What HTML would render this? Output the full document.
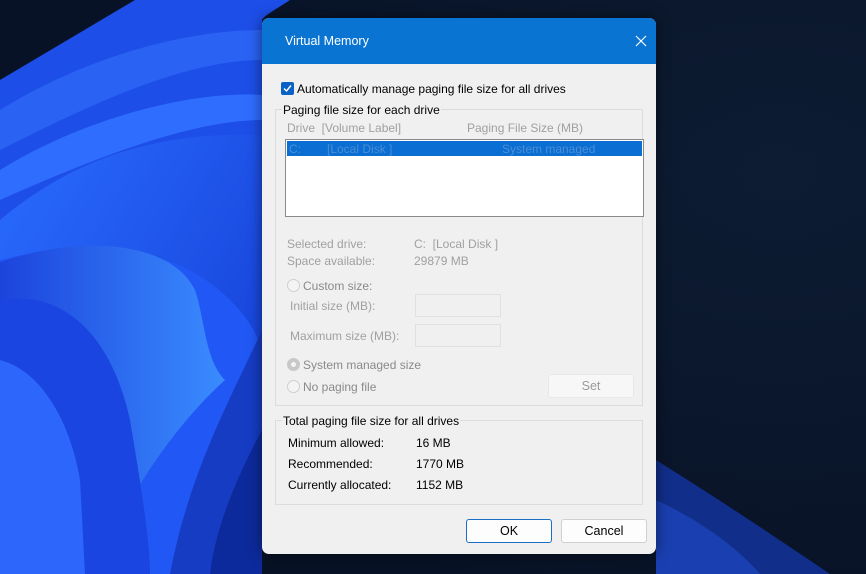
<!DOCTYPE html>
<html><head><meta charset="utf-8"><style>
*{margin:0;padding:0;box-sizing:border-box}
body{width:866px;height:574px;overflow:hidden;position:relative;background:#0b1830;font-family:"Liberation Sans",sans-serif;font-size:12px;color:#000}
.a{position:absolute;white-space:nowrap}
.g{color:#a0a0a0}
#dlg{position:absolute;left:262px;top:18px;width:394px;height:536px;background:#f0f0f0;border-radius:7px;overflow:hidden;box-shadow:0 0 14px rgba(0,0,0,.5)}
#tb{position:absolute;left:0;top:0;width:394px;height:46px;background:#0a74d2}
.box{position:absolute;border:1px solid #dcdcdc}
.btn{position:absolute;background:#fdfdfd;border:1px solid #d0d0d0;border-radius:3px;text-align:center;line-height:22px;font-size:12.5px}
.rad{position:absolute;width:13px;height:13px;border-radius:50%;border:1px solid #cfcfcf;background:#f4f4f4}
</style></head><body>
<svg class="a" style="left:0;top:0" width="866" height="574">
<defs>
<radialGradient id="bg" cx="0.9" cy="0.3" r="0.8"><stop offset="0" stop-color="#0d1c33"/><stop offset="1" stop-color="#081226"/></radialGradient>
<linearGradient id="b1" x1="0" y1="0" x2="1" y2="1"><stop offset="0" stop-color="#2a6cff"/><stop offset="1" stop-color="#1238d0"/></linearGradient>
<linearGradient id="b3" x1="0" y1="0" x2="1" y2="0"><stop offset="0" stop-color="#1c44dc"/><stop offset="1" stop-color="#3a8cff"/></linearGradient>
</defs>
<rect width="866" height="574" fill="url(#bg)"/>
<path d="M0 80 L135 0 L290 0 C275 10 265 15 262 20 L262 574 L0 574 Z" fill="#1d4ee8"/>
<path d="M0 110 C80 60 180 30 262 30 L262 60 C180 60 80 110 0 150 Z" fill="#2a63f4"/>
<path d="M0 170 C80 120 190 90 262 95 L262 120 C190 120 90 160 0 200 Z" fill="#2f6dff"/>
<path d="M0 220 C60 170 140 130 262 135 L262 574 L0 574 Z" fill="url(#b1)"/>
<path d="M0 260 C80 240 170 240 230 300 C250 320 262 340 262 360 L262 574 L0 574 Z" fill="#2158f5"/>
<path d="M0 262 C80 235 170 240 195 290 C205 320 205 360 225 380 C180 420 120 500 100 574 L0 574 Z" fill="url(#b3)"/>
<path d="M0 300 C60 290 110 330 130 420 C140 480 150 540 150 574 L0 574 Z" fill="#1a45e0"/>
<path d="M0 360 C40 370 70 420 80 480 L85 574 L0 574 Z" fill="#2c66fb"/>
<path d="M262 330 C230 400 190 470 170 574 L262 574 Z" fill="#163cc4"/>
<path d="M262 430 C235 480 215 530 210 574 L262 574 Z" fill="#0d2a9c"/>
<path d="M656 460 C720 500 780 540 830 574 L656 574 Z" fill="#112e8a"/>
<path d="M656 500 C700 520 740 550 760 574 L656 574 Z" fill="#1a3fb0"/>
</svg>
<div id="dlg">
<div id="tb">
<div class="a" style="left:23px;top:16px;color:#fff;font-size:12.5px">Virtual Memory</div>
<svg class="a" style="left:373px;top:17px" width="12" height="12"><path d="M1 1L11 11M11 1L1 11" stroke="#fff" stroke-width="1.2"/></svg>
</div>
<div class="a" style="left:19px;top:64px;width:13px;height:13px;background:#0a63c4;border-radius:2px"><svg width="13" height="13"><path d="M3 6.5L5.5 9L10 3.5" stroke="#fff" stroke-width="1.4" fill="none"/></svg></div>
<div class="a" style="left:35px;top:64px">Automatically manage paging file size for all drives</div>
<div class="box" style="left:13px;top:91px;width:368px;height:297px"></div>
<div class="a" style="left:20px;top:85px;background:#f0f0f0;padding:0 1px">Paging file size for each drive</div>
<div class="a g" style="left:25px;top:103px">Drive&nbsp; [Volume Label]</div>
<div class="a g" style="left:205px;top:103px">Paging File Size (MB)</div>
<div class="a" style="left:23px;top:121px;width:359px;height:78px;background:#fff;border:1px solid #8a8a8a"></div>
<div class="a" style="left:25px;top:123px;width:355px;height:15px;background:#0a6ed2"></div>
<div class="a" style="left:27px;top:124px;color:#4d8ed4">C:</div>
<div class="a" style="left:65px;top:124px;color:#4d8ed4">[Local Disk ]</div>
<div class="a" style="left:240px;top:124px;color:#4d8ed4">System managed</div>
<div class="a g" style="left:25px;top:219px">Selected drive:</div>
<div class="a g" style="left:152px;top:219px">C:&nbsp; [Local Disk ]</div>
<div class="a g" style="left:25px;top:236px">Space available:</div>
<div class="a g" style="left:152px;top:236px">29879 MB</div>
<div class="rad" style="left:25px;top:261px"></div>
<div class="a g" style="left:41px;top:261px;color:#8a8a8a">Custom size:</div>
<div class="a g" style="left:28px;top:281px">Initial size (MB):</div>
<div class="a" style="left:153px;top:276px;width:86px;height:23px;border:1px solid #e0e0e0"></div>
<div class="a g" style="left:28px;top:311px">Maximum size (MB):</div>
<div class="a" style="left:153px;top:306px;width:86px;height:23px;border:1px solid #e0e0e0"></div>
<div class="rad" style="left:25px;top:340px;border:4px solid #c8c8c8;background:#f4f4f4"></div>
<div class="a" style="left:41px;top:340px;color:#8a8a8a">System managed size</div>
<div class="rad" style="left:25px;top:362px"></div>
<div class="a" style="left:41px;top:362px;color:#8a8a8a">No paging file</div>
<div class="btn" style="left:286px;top:356px;width:86px;height:24px;color:#9a9a9a;border-color:#e8e8e8;background:#f7f7f7">Set</div>
<div class="box" style="left:13px;top:402px;width:368px;height:85px"></div>
<div class="a" style="left:20px;top:396px;background:#f0f0f0;padding:0 1px">Total paging file size for all drives</div>
<div class="a" style="left:26px;top:418px">Minimum allowed:</div><div class="a" style="left:154px;top:418px">16 MB</div>
<div class="a" style="left:26px;top:439px">Recommended:</div><div class="a" style="left:154px;top:439px">1770 MB</div>
<div class="a" style="left:26px;top:460px">Currently allocated:</div><div class="a" style="left:154px;top:460px">1152 MB</div>
<div class="btn" style="left:204px;top:501px;width:86px;height:24px;border:1px solid #1a6fc4">OK</div>
<div class="btn" style="left:299px;top:501px;width:86px;height:24px">Cancel</div>
</div>
</body></html>
